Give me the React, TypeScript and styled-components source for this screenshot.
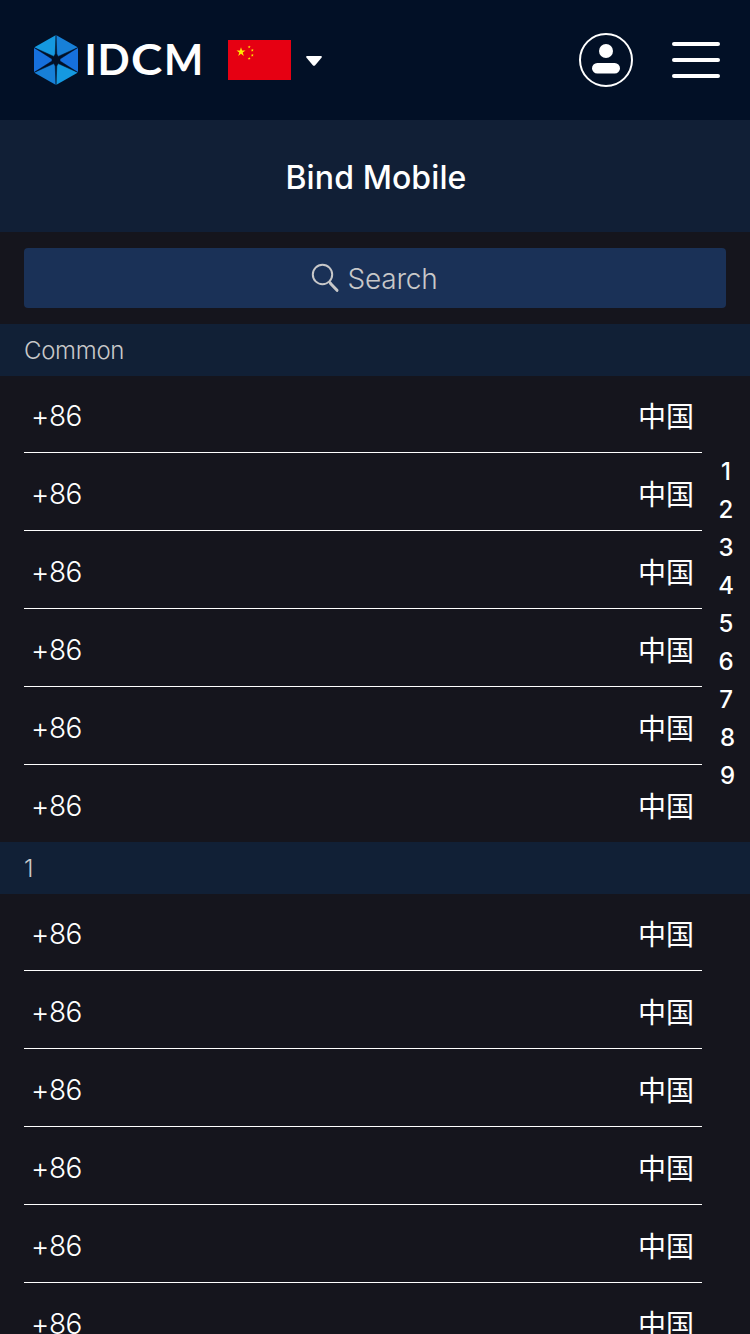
import React from "react";
import styled, { createGlobalStyle } from "styled-components";

const GlobalStyle = createGlobalStyle`
  * { box-sizing: border-box; }
  html, body { margin: 0; padding: 0; background: #15151d; }
  body { font-family: Inter, "Noto Sans CJK SC", sans-serif; color: #fff; }
`;

const Page = styled.div`
  position: relative;
  width: 750px;
  height: 1334px;
  overflow: hidden;
  background: #15151d;
`;

const Header = styled.header`
  display: flex;
  align-items: center;
  height: 120px;
  padding: 0 30px 0 32px;
  background: #021026;
`;

const Logo = styled.svg`
  width: 176px;
  height: 56px;
  margin-right: 20px;
`;

const LogoText = styled.text`
  font-family: Lato, sans-serif;
  font-weight: 700;
  font-size: 41.5px;
  fill: #fff;
`;

const Flag = styled.svg`
  width: 63px;
  height: 40px;
`;

const Caret = styled.svg`
  width: 16px;
  height: 10px;
  margin: 2px 0 0 15px;
`;

const Actions = styled.div`
  display: flex;
  align-items: center;
  gap: 38px;
  margin-left: auto;
`;

const Avatar = styled.svg`
  width: 56px;
  height: 56px;
`;

const MenuButton = styled.div`
  display: flex;
  flex-direction: column;
  gap: 12px;
`;

const MenuBar = styled.span`
  width: 48px;
  height: 4px;
  border-radius: 2px;
  background: #fff;
`;

const TitleBar = styled.h1`
  height: 112px;
  margin: 0;
  padding: 1px 0 0 2px;
  line-height: 114px;
  text-align: center;
  font-size: 32px;
  font-weight: 500;
  letter-spacing: 0.1px;
  background: #111f36;
`;

const SearchArea = styled.div`
  padding: 16px 24px;
`;

const SearchBox = styled.div`
  display: flex;
  align-items: center;
  justify-content: center;
  gap: 8px;
  height: 60px;
  padding-right: 2px;
  border-radius: 4px;
  background: #1a3157;
  color: #c8c8c9;
  font-size: 28px;
  font-weight: 300;
  line-height: 40px;
  letter-spacing: -0.25px;
`;

const SearchLabel = styled.span`
  padding-top: 1px;
`;

const SearchIcon = styled.svg`
  width: 29px;
  height: 30px;
`;

const SectionTitle = styled.h2`
  height: 52px;
  margin: 0;
  padding-left: 24px;
  line-height: 53px;
  font-size: 24px;
  font-weight: 300;
  letter-spacing: -0.3px;
  color: #c8c8c9;
  background: #112036;
`;

const List = styled.ul`
  margin: -1px 48px 0 24px;
  padding: 0;
  list-style: none;
`;

const Row = styled.li`
  display: flex;
  align-items: center;
  justify-content: space-between;
  height: 78px;
  padding: 3px 8px 0 7px;
  border-bottom: 1px solid #fff;
  &:last-child {
    height: 77px;
    border-bottom: 0;
  }
`;

const Code = styled.span`
  padding-top: 1px;
  font-size: 28px;
  font-weight: 300;
  line-height: 40px;
  letter-spacing: -0.4px;
`;

const Country = styled.span`
  font-family: "Noto Sans CJK SC", sans-serif;
  font-size: 28px;
  font-weight: 400;
  line-height: 40px;
`;

const IndexBar = styled.nav`
  position: absolute;
  top: 453px;
  right: 10px;
  width: 28px;
  display: flex;
  flex-direction: column;
  align-items: center;
`;

const IndexItem = styled.span<{ $shift: number }>`
  height: 38px;
  line-height: 38px;
  font-size: 24px;
  font-weight: 500;
  padding-left: ${(p) => p.$shift}px;
`;

const Star = "0,-4.4 1,-1.4 4.2,-1.4 1.6,0.5 2.6,3.6 0,1.7 -2.6,3.6 -1.6,0.5 -4.2,-1.4 -1,-1.4";

const sections = [
  { title: "Common", count: 6 },
  { title: "1", count: 7 },
];

export default function App() {
  return (
    <Page>
      <GlobalStyle />
      <Header>
        <Logo viewBox="0 0 176 56">
          <path d="M24 28V3L2 15.5Z" fill="#1599e0" />
          <path d="M24 28V3L46 15.5Z" fill="#1780d8" />
          <path d="M24 28L46 15.5V40.5Z" fill="#1670dd" />
          <path d="M24 28L46 40.5L24 53Z" fill="#1599e0" />
          <path d="M24 28V53L2 40.5Z" fill="#1780d8" />
          <path d="M24 28L2 40.5V15.5Z" fill="#1670dd" />
          <path
            d="M24 3L24.8 22L26.2 24.4L46 15.5L28 27V29L46 40.5L26.2 31.6L24.8 34L24 53L23.2 34L21.8 31.6L2 40.5L20 29V27L2 15.5L21.8 24.4L23.2 22Z"
            fill="#021026"
            stroke="#021026"
            strokeWidth="0.5"
          />
          <LogoText x="52.5" y="43">I</LogoText>
          <LogoText transform="translate(65.5 43) scale(1.02 1)">D</LogoText>
          <LogoText transform="translate(99 43) scale(1.14 1)">C</LogoText>
          <LogoText x="132" y="43">M</LogoText>
        </Logo>
        <Flag viewBox="0 0 63 40">
          <rect width="63" height="40" fill="#e60012" />
          <g fill="#ffea00">
            <polygon points={Star} transform="translate(13 12) scale(1.08)" />
            <polygon points={Star} transform="translate(21.2 7) scale(.36)" />
            <polygon points={Star} transform="translate(24.3 10.3) scale(.36)" />
            <polygon points={Star} transform="translate(24.3 15.3) scale(.36)" />
            <polygon points={Star} transform="translate(21.2 18.5) scale(.36)" />
          </g>
        </Flag>
        <Caret viewBox="0 0 16 10">
          <path d="M1 0H15Q16.4 .4 15.5 1.7L9.2 9.2Q8 10.5 6.8 9.2L.5 1.7Q-.4 .4 1 0Z" fill="#fff" />
        </Caret>
        <Actions>
          <Avatar viewBox="0 0 56 56">
            <circle cx="28" cy="28" r="26" fill="none" stroke="#fff" strokeWidth="2" />
            <circle cx="28" cy="19" r="7" fill="#fff" />
            <rect x="14" y="31" width="28" height="10.6" rx="5.3" fill="#fff" />
          </Avatar>
          <MenuButton>
            <MenuBar />
            <MenuBar />
            <MenuBar />
          </MenuButton>
        </Actions>
      </Header>
      <TitleBar>Bind Mobile</TitleBar>
      <SearchArea>
        <SearchBox>
          <SearchIcon viewBox="0 0 29 30" fill="none" stroke="#c8c8c9">
            <circle cx="11.5" cy="11.5" r="9.7" strokeWidth="2" />
            <path d="M18.3 18.5L20 20.3" strokeWidth="2" />
            <path d="M19.5 20.5L26 27.3" strokeWidth="3" strokeLinecap="round" />
          </SearchIcon>
          <SearchLabel>Search</SearchLabel>
        </SearchBox>
      </SearchArea>
      {sections.map((section) => (
        <section key={section.title}>
          <SectionTitle>{section.title}</SectionTitle>
          <List>
            {Array.from({ length: section.count }, (_, i) => (
              <Row key={i}>
                <Code>+86</Code>
                <Country>中国</Country>
              </Row>
            ))}
          </List>
        </section>
      ))}
      <IndexBar>
        {[1, 2, 3, 4, 5, 6, 7, 8, 9].map((n) => (
          <IndexItem key={n} $shift={n > 7 ? 3 : 0}>
            {n}
          </IndexItem>
        ))}
      </IndexBar>
    </Page>
  );
}
